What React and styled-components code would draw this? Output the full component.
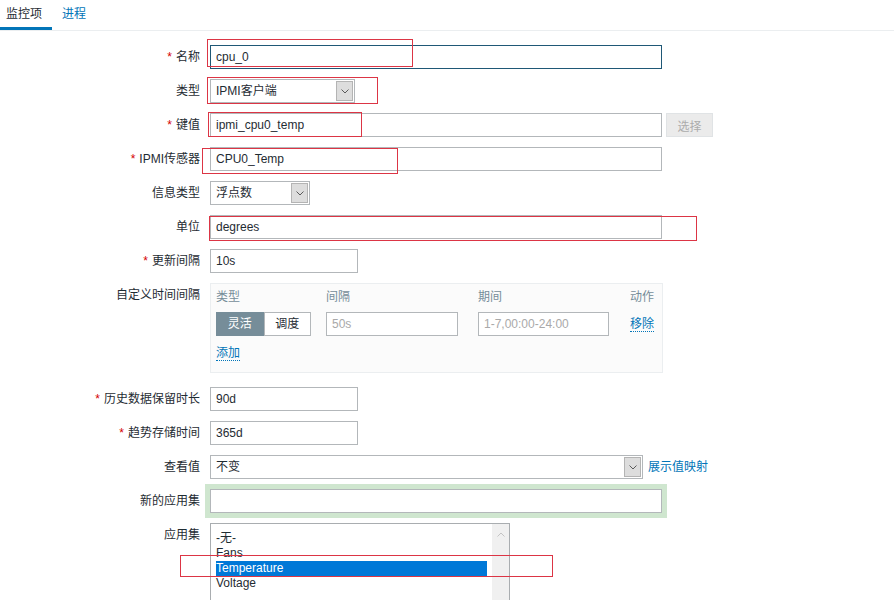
import React from "react"
import styled, {createGlobalStyle} from "styled-components";

const GlobalStyle = createGlobalStyle`
    body {
        margin: 0;
        background: #ffffff;
        font-family: "Liberation Sans", Arial, "Noto Sans CJK SC", sans-serif;
        font-size: 12px;
        color: #1f2c33;
    }
`

const Chevron = ({up}) => (
    <svg width="8" height="5" viewBox="0 0 8 5">
        <path d={up ? "M0.5 4.5 L4 1 L7.5 4.5" : "M0.5 0.5 L4 4 L7.5 0.5"} fill="none"
              stroke={up ? "#c4c4c4" : "#5a5a5a"} strokeWidth="1"/>
    </svg>
)

const FormRow = ({label, required, children, spaced}) => (
    <Row spaced={spaced}>
        <Label>{required && <Star>*</Star>}{label}</Label>
        <Field>{children}</Field>
    </Row>
)

const SelectBox = ({width, value}) => (
    <Select $width={width}>
        <SelectText>{value}</SelectText>
        <ArrowBox><Chevron/></ArrowBox>
    </Select>
)

const App = () => {
    const apps = ["-无-", "Fans", "Temperature", "Voltage"]

    return <Page>
        <GlobalStyle/>
        <Tabs>
            <Tab active>监控项</Tab>
            <Tab>进程</Tab>
        </Tabs>
        <Form>
            <FormRow label="名称" required>
                <Input $width={452} focused defaultValue="cpu_0"/>
                <Mark style={{left: -3, top: -6, width: 206, height: 28}}/>
            </FormRow>
            <FormRow label="类型">
                <SelectBox width={145} value="IPMI客户端"/>
                <Mark style={{left: -3, top: -2, width: 171, height: 27}}/>
            </FormRow>
            <FormRow label="键值" required>
                <Input $width={452} defaultValue="ipmi_cpu0_temp"/>
                <Button disabled>选择</Button>
                <Mark style={{left: -2, top: -1, width: 154, height: 25}}/>
            </FormRow>
            <FormRow label="IPMI传感器" required>
                <Input $width={452} defaultValue="CPU0_Temp"/>
                <Mark style={{left: -8, top: 1, width: 196, height: 26}}/>
            </FormRow>
            <FormRow label="信息类型">
                <SelectBox width={100} value="浮点数"/>
            </FormRow>
            <FormRow label="单位">
                <Input $width={452} defaultValue="degrees"/>
                <Mark style={{left: -1, top: 1, width: 488, height: 25}}/>
            </FormRow>
            <FormRow label="更新间隔" required>
                <Input $width={148} defaultValue="10s"/>
            </FormRow>
            <FormRow label="自定义时间间隔" spaced>
                <IntervalBox>
                    <IntervalGrid>
                        <HeadCell>类型</HeadCell>
                        <HeadCell>间隔</HeadCell>
                        <HeadCell>期间</HeadCell>
                        <HeadCell>动作</HeadCell>
                        <Segment>
                            <SegmentItem active>灵活</SegmentItem>
                            <SegmentItem>调度</SegmentItem>
                        </Segment>
                        <Input $width={132} placeholder="50s"/>
                        <Input $width={131} placeholder="1-7,00:00-24:00"/>
                        <LinkCell><Link>移除</Link></LinkCell>
                    </IntervalGrid>
                    <AddLine><Link>添加</Link></AddLine>
                </IntervalBox>
            </FormRow>
            <FormRow label="历史数据保留时长" required>
                <Input $width={148} defaultValue="90d"/>
            </FormRow>
            <FormRow label="趋势存储时间" required>
                <Input $width={148} defaultValue="365d"/>
            </FormRow>
            <FormRow label="查看值">
                <SelectBox width={433} value="不变"/>
                <PlainLink>展示值映射</PlainLink>
            </FormRow>
            <FormRow label="新的应用集">
                <Input $width={452} glow/>
            </FormRow>
            <FormRow label="应用集">
                <ListBox>
                    <ListItems>
                        {apps.map(app => (
                            <ListItem key={app} selected={app === "Temperature"}>{app}</ListItem>
                        ))}
                    </ListItems>
                    <ScrollTrack><Chevron up/></ScrollTrack>
                </ListBox>
                <Mark style={{left: -30, top: 32, width: 373, height: 22}}/>
            </FormRow>
        </Form>
    </Page>
}
export default App


const Page = styled.div`
    width: 894px;
    height: 600px;
    overflow: hidden;
`

const Tabs = styled.div`
    display: flex;
    height: 30px;
    border-bottom: 1px solid #ebeef0;
`

const Tab = styled.div`
    height: 30px;
    box-sizing: border-box;
    line-height: 28px;
    padding: 0 10px 0 ${p => p.active ? "6px" : "10px"};
    font-size: 12px;
    color: ${p => p.active ? "#1f2c33" : "#0275b8"};
    border-bottom: 3px solid ${p => p.active ? "#0275b8" : "transparent"};
`

const Form = styled.div`
    display: flex;
    flex-direction: column;
    padding-top: 9px;
`

const Row = styled.div`
    display: grid;
    grid-template-columns: 200px 1fr;
    column-gap: 10px;
    padding: 5px 0 ${p => p.spaced ? "9px" : "5px"};
`

const Label = styled.div`
    text-align: right;
    line-height: 24px;
    white-space: nowrap;
`

const Star = styled.span`
    color: #d40000;
    margin-right: 4px;
`

const Field = styled.div`
    position: relative;
    display: flex;
    align-items: flex-start;
    gap: 4px;
`

const Input = styled.input`
    width: ${p => p.$width}px;
    height: 24px;
    box-sizing: border-box;
    margin: 0;
    padding: 0 5px;
    border: 1px solid ${p => p.focused ? "#1f5876" : "#b3b7ba"};
    background: #ffffff;
    color: #1f2c33;
    font-family: inherit;
    font-size: 12px;
    outline: none;
    box-shadow: ${p => p.glow ? "0 0 0 5px #cfe6cf" : "none"};

    &::placeholder {
        color: #a9a9a9;
    }
`

const Button = styled.button`
    width: 47px;
    height: 24px;
    margin: 0;
    padding: 0;
    border: 1px solid #e0e3e5;
    background: #ebebeb;
    color: #acacac;
    font-family: inherit;
    font-size: 12px;
`

const Select = styled.div`
    width: ${p => p.$width}px;
    height: 24px;
    box-sizing: border-box;
    display: flex;
    align-items: stretch;
    border: 1px solid #b3b7ba;
    background: #ffffff;
`

const SelectText = styled.div`
    flex: 1;
    padding-left: 5px;
    line-height: 22px;
    overflow: hidden;
    white-space: nowrap;
`

const ArrowBox = styled.div`
    width: 15px;
    margin: 1px;
    display: flex;
    align-items: center;
    justify-content: center;
    background: #dddddd;
    border: 1px solid #b4b4b4;
`

const IntervalBox = styled.div`
    width: 453px;
    box-sizing: border-box;
    padding: 5px 5px 11px;
    background: #fbfbfb;
    border: 1px solid #ebeef0;
`

const IntervalGrid = styled.div`
    display: grid;
    grid-template-columns: 110px 152px 152px auto;
    grid-template-rows: 16px 24px;
    row-gap: 7px;
    align-items: center;
`

const HeadCell = styled.div`
    color: #768d99;
    line-height: 16px;
`

const Segment = styled.div`
    display: flex;
    width: 95px;
    height: 24px;
`

const SegmentItem = styled.div`
    flex: 1;
    box-sizing: border-box;
    line-height: 22px;
    text-align: center;
    border: 1px solid ${p => p.active ? "#768d99" : "#b3b7ba"};
    background: ${p => p.active ? "#768d99" : "#ffffff"};
    color: ${p => p.active ? "#ffffff" : "#1f2c33"};
`

const LinkCell = styled.div`
    line-height: 18px;
`

const Link = styled.span`
    color: #0275b8;
    border-bottom: 1px dotted #0275b8;
`

const PlainLink = styled.span`
    color: #0275b8;
    line-height: 24px;
    margin-left: 1px;
`

const AddLine = styled.div`
    margin-top: 9px;
    line-height: 16px;
`

const ListBox = styled.div`
    width: 300px;
    height: 130px;
    box-sizing: border-box;
    display: flex;
    border: 1px solid #a9adb0;
    background: #ffffff;
`

const ListItems = styled.div`
    flex: 1;
    padding: 7px 5px 0 5px;
`

const ListItem = styled.div`
    height: 15px;
    line-height: 15px;
    font-size: 12px;
    color: ${p => p.selected ? "#ffffff" : "#1f2c33"};
    background: ${p => p.selected ? "#0078d7" : "transparent"};
`

const ScrollTrack = styled.div`
    width: 17px;
    background: #f0f0f0;
    display: flex;
    justify-content: center;
    padding-top: 8px;
    box-sizing: border-box;
`

const Mark = styled.div`
    position: absolute;
    box-sizing: border-box;
    border: 1px solid #dc3545;
    pointer-events: none;
`
